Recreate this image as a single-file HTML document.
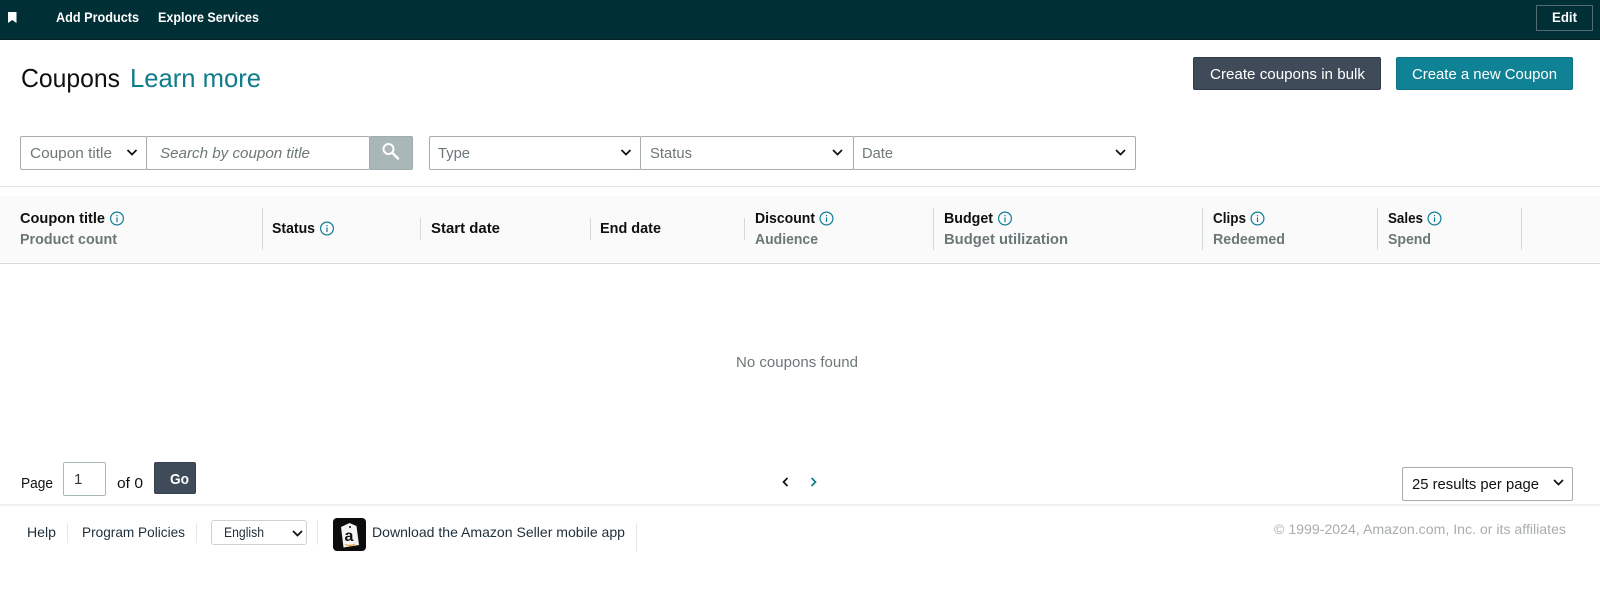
<!DOCTYPE html>
<html lang="en"><head><meta charset="utf-8"><title>Coupons</title>
<style>
html,body{margin:0;padding:0;background:#fff}
body{position:relative;width:1600px;height:589px;overflow:hidden;font-family:"Liberation Sans",sans-serif}
.b{position:absolute;box-sizing:border-box}
.sel{border:1px solid #a6acb0;background:#fff;border-radius:2px}
.sep{position:absolute;width:1px;background:#d5d9d9}
svg{position:absolute;left:0;top:0}
text{font-family:"Liberation Sans",sans-serif;font-size:15px;fill:#0f1111}
.h{font-weight:700;font-size:15px}
.s{font-weight:700;font-size:15px;fill:#6c7778}
.g{fill:#6c7778}
.w{fill:#fff;font-weight:700;font-size:14px}
.bt{fill:#fff;font-size:15px}
.f{font-size:14px;fill:#1f2f3a}
.chev{fill:none;stroke:#0f1111;stroke-width:1.700}
</style></head><body>
<div class="b" style="left:0;top:0;width:1600px;height:40px;background:#002f36;border-bottom:1px solid #0a1f24"></div>
<div class="b" style="left:1536px;top:5px;width:57px;height:26px;border:1px solid #566b70"></div>
<div class="b" style="left:1193px;top:57px;width:188px;height:33px;background:#404b5a;border:1px solid #2f3a4a;border-radius:2px"></div>
<div class="b" style="left:1396px;top:57px;width:177px;height:33px;background:#108295;border:1px solid #0e7383;border-radius:2px"></div>
<div class="b sel" style="left:20px;top:136px;width:127px;height:34px"></div>
<div class="b sel" style="left:146px;top:136px;width:224px;height:34px"></div>
<div class="b" style="left:369px;top:136px;width:44px;height:34px;background:#aab7b8;border:1px solid #a0adae;border-radius:2px"></div>
<div class="b sel" style="left:429px;top:136px;width:212px;height:34px"></div>
<div class="b sel" style="left:640px;top:136px;width:214px;height:34px"></div>
<div class="b sel" style="left:853px;top:136px;width:283px;height:34px"></div>
<div class="b" style="left:0;top:186px;width:1600px;height:1px;background:#e3e6e6"></div>
<div class="b" style="left:0;top:196px;width:1600px;height:68px;background:#fafafa;border-bottom:1px solid #d5dbdb"></div>
<div class="sep" style="left:262px;top:208px;height:42px"></div>
<div class="sep" style="left:420px;top:218px;height:22px"></div>
<div class="sep" style="left:590px;top:218px;height:22px"></div>
<div class="sep" style="left:744px;top:218px;height:22px"></div>
<div class="sep" style="left:933px;top:208px;height:42px"></div>
<div class="sep" style="left:1202px;top:208px;height:42px"></div>
<div class="sep" style="left:1377px;top:208px;height:42px"></div>
<div class="sep" style="left:1521px;top:208px;height:42px"></div>
<div class="b" style="left:63px;top:462px;width:43px;height:34px;border:1px solid #aab7b8;border-radius:2px"></div>
<div class="b" style="left:154px;top:462px;width:42px;height:32px;background:#404b5a;border:1px solid #36414f;border-radius:2px"></div>
<div class="b sel" style="left:1402px;top:467px;width:171px;height:34px"></div>
<div class="b" style="left:0;top:504px;width:1600px;height:2px;background:#f0f1f1"></div>
<div class="sep" style="left:67px;top:523px;height:20px;background:#e7e9e9"></div>
<div class="sep" style="left:196px;top:523px;height:20px;background:#e7e9e9"></div>
<div class="sep" style="left:317px;top:520px;height:25px;background:#e7e9e9"></div>
<div class="sep" style="left:636px;top:523px;height:29px;background:#e7e9e9"></div>
<div class="b" style="left:211px;top:520px;width:96px;height:25px;border:1px solid #cdd2d2;border-radius:3px"></div>
<svg width="1600" height="589" viewBox="0 0 1600 589" xmlns="http://www.w3.org/2000/svg">
<path d="M8 12h8.500v11l-4.250-3-4.250 3z" fill="#fff"/>
<text class="w" x="56" y="22" textLength="83" lengthAdjust="spacingAndGlyphs">Add Products</text>
<text class="w" x="158" y="22" textLength="101" lengthAdjust="spacingAndGlyphs">Explore Services</text>
<text class="w" x="1552" y="22" textLength="25" lengthAdjust="spacingAndGlyphs">Edit</text>
<text x="21" y="87" style="font-size:26px" textLength="99" lengthAdjust="spacingAndGlyphs">Coupons</text>
<text x="130" y="87" style="font-size:26px;fill:#0f7c8c" textLength="131" lengthAdjust="spacingAndGlyphs">Learn more</text>
<text class="bt" x="1210" y="79" textLength="155" lengthAdjust="spacingAndGlyphs">Create coupons in bulk</text>
<text class="bt" x="1412" y="79" textLength="145" lengthAdjust="spacingAndGlyphs">Create a new Coupon</text>
<text class="g" x="30" y="158" textLength="82" lengthAdjust="spacingAndGlyphs">Coupon title</text>
<path class="chev" d="M127.500 150l4.500 4.500 4.500-4.500"/>
<text class="g" x="160" y="158" style="font-style:italic" textLength="150" lengthAdjust="spacingAndGlyphs">Search by coupon title</text>
<circle cx="388.500" cy="149" r="5" fill="none" stroke="#fff" stroke-width="2"/>
<path d="M392.500 153l5.500 5.500" stroke="#fff" stroke-width="2.600" stroke-linecap="round"/>
<text class="g" x="438" y="158" textLength="32" lengthAdjust="spacingAndGlyphs">Type</text>
<path class="chev" d="M621.500 150l4.500 4.500 4.500-4.500"/>
<text class="g" x="650" y="158" textLength="42" lengthAdjust="spacingAndGlyphs">Status</text>
<path class="chev" d="M833 150l4.500 4.500 4.500-4.500"/>
<text class="g" x="862" y="158" textLength="31" lengthAdjust="spacingAndGlyphs">Date</text>
<path class="chev" d="M1116 150l4.500 4.500 4.500-4.500"/>
<text class="h" x="20" y="223" textLength="85" lengthAdjust="spacingAndGlyphs">Coupon title</text>
<text class="s" x="20" y="244" textLength="97" lengthAdjust="spacingAndGlyphs">Product count</text>
<text class="h" x="272" y="233" textLength="43" lengthAdjust="spacingAndGlyphs">Status</text>
<text class="h" x="431" y="233" textLength="69" lengthAdjust="spacingAndGlyphs">Start date</text>
<text class="h" x="600" y="233" textLength="61" lengthAdjust="spacingAndGlyphs">End date</text>
<text class="h" x="755" y="223" textLength="60" lengthAdjust="spacingAndGlyphs">Discount</text>
<text class="s" x="755" y="244" textLength="63" lengthAdjust="spacingAndGlyphs">Audience</text>
<text class="h" x="944" y="223" textLength="49" lengthAdjust="spacingAndGlyphs">Budget</text>
<text class="s" x="944" y="244" textLength="124" lengthAdjust="spacingAndGlyphs">Budget utilization</text>
<text class="h" x="1213" y="223" textLength="33" lengthAdjust="spacingAndGlyphs">Clips</text>
<text class="s" x="1213" y="244" textLength="72" lengthAdjust="spacingAndGlyphs">Redeemed</text>
<text class="h" x="1388" y="223" textLength="35" lengthAdjust="spacingAndGlyphs">Sales</text>
<text class="s" x="1388" y="244" textLength="43" lengthAdjust="spacingAndGlyphs">Spend</text>
<g fill="none" stroke="#0f7c95" stroke-width="1.200">
<circle cx="117" cy="218.500" r="6.400"/><circle cx="327" cy="228.500" r="6.400"/><circle cx="826.500" cy="218.500" r="6.400"/><circle cx="1005" cy="218.500" r="6.400"/><circle cx="1257.500" cy="218.500" r="6.400"/><circle cx="1434.500" cy="218.500" r="6.400"/>
<path d="M117 217.500v4.500M327 227.500v4.500M826.500 217.500v4.500M1005 217.500v4.500M1257.500 217.500v4.500M1434.500 217.500v4.500"/>
<path d="M117 215v1.200M327 225v1.200M826.500 215v1.200M1005 215v1.200M1257.500 215v1.200M1434.500 215v1.200"/>
</g>
<text class="g" x="736" y="367" textLength="122" lengthAdjust="spacingAndGlyphs">No coupons found</text>
<text x="21" y="488" textLength="32" lengthAdjust="spacingAndGlyphs">Page</text>
<text x="74" y="484" style="fill:#333">1</text>
<text x="117" y="488" textLength="26" lengthAdjust="spacingAndGlyphs">of 0</text>
<text x="170" y="484" style="fill:#fff;font-weight:700" textLength="19" lengthAdjust="spacingAndGlyphs">Go</text>
<path class="chev" d="M787.500 478l-4 4 4 4"/>
<path class="chev" style="stroke:#0f7c8c" d="M811.500 478l4 4-4 4"/>
<text x="1412" y="489" textLength="127" lengthAdjust="spacingAndGlyphs">25 results per page</text>
<path class="chev" d="M1554 480l4.500 4.500 4.500-4.500"/>
<text class="f" x="27" y="537" textLength="29" lengthAdjust="spacingAndGlyphs">Help</text>
<text class="f" x="82" y="537" textLength="103" lengthAdjust="spacingAndGlyphs">Program Policies</text>
<text class="f" x="224" y="537" textLength="40" lengthAdjust="spacingAndGlyphs">English</text>
<path class="chev" d="M293 531l4.500 4.500 4.500-4.500"/>
<rect x="333" y="518" width="33" height="33" rx="4" fill="#0c0c0c"/>
<path d="M341 527l8.500-4 7 3 2.500 19-15.500 2.500z" fill="#f4f4f4"/>
<circle cx="350" cy="527" r="1" fill="#0c0c0c"/>
<text x="344.500" y="541" style="font-size:16px;font-weight:700;fill:#111">a</text>
<path d="M345 544.500c3 1.500 7 1.300 10-.5" fill="none" stroke="#f0a030" stroke-width="1.200"/>
<text class="f" x="372" y="537" textLength="253" lengthAdjust="spacingAndGlyphs">Download the Amazon Seller mobile app</text>
<text x="1274" y="534" style="font-size:14px;fill:#a9adad" textLength="292" lengthAdjust="spacingAndGlyphs">© 1999-2024, Amazon.com, Inc. or its affiliates</text>
</svg>
</body></html>
